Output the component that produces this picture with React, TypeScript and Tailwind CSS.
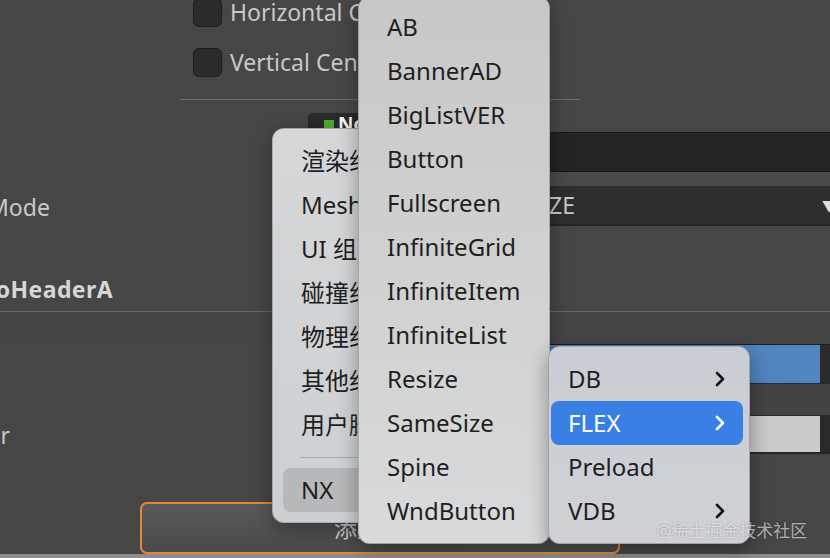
import React from 'react';

const font = { fontFamily: '"Noto Sans", "Noto Sans CJK SC", sans-serif' };

const Chevron = ({ light }: { light?: boolean }) => (
  <svg width="10" height="16" viewBox="0 0 10 16" className="shrink-0">
    <path d="M2 2 L8 8 L2 14" fill="none" stroke={light ? '#ffffff' : '#111111'} strokeWidth="2.6" strokeLinecap="round" strokeLinejoin="round" />
  </svg>
);

const CheckRow = ({ label }: { label: string }) => (
  <div className="flex items-center gap-2 pl-[193px] h-[29px]">
    <div className="w-[29px] h-[29px] rounded-[6px] bg-[#2b2b2b] border border-[#1e1e1e] shrink-0" />
    <span className="text-[23px] text-[#c9c9c9] whitespace-nowrap">{label}</span>
  </div>
);

const mainItems = ['渲染组件', 'Mesh 渲染器', 'UI 组件', '碰撞组件', '物理组件', '其他组件', '用户脚本组件'];
const nxItems = ['AB', 'BannerAD', 'BigListVER', 'Button', 'Fullscreen', 'InfiniteGrid', 'InfiniteItem', 'InfiniteList', 'Resize', 'SameSize', 'Spine', 'WndButton'];
const subItems = [
  { name: 'DB', sub: true },
  { name: 'FLEX', sub: true, active: true },
  { name: 'Preload', sub: false },
  { name: 'VDB', sub: true },
];

export default function App() {
  return (
    <div className="relative w-[830px] h-[558px] overflow-hidden bg-[#464646]" style={font}>
      {/* inspector panel behind the menus */}
      <div className="flex flex-col h-full">
        <div className="mt-[-2px] flex flex-col gap-[21px]">
          <CheckRow label="Horizontal Center" />
          <CheckRow label="Vertical Center" />
        </div>
        <div className="mt-[22px] ml-[180px] w-[400px] h-px bg-[#6b6b6b]" />
        <div className="mt-[13px] ml-[308px] h-[19px] w-[90px] rounded-t-[5px] bg-[#2a2a2a] flex items-start gap-1 pl-4 pt-[7px]">
          <div className="w-[10px] h-[10px] bg-[#4caf32]" />
          <span className="text-[19px] font-bold text-white leading-[12px] mt-[-2px]">Node</span>
        </div>
        <div className="ml-[300px] h-[40px] bg-[#242424] border-y border-[#1a1a1a]" />
        <div className="ml-[300px] h-[14px] bg-[#4a4a4a]" />
        <div className="flex h-[40px] items-center">
          <div className="w-[300px] shrink-0 overflow-hidden">
            <span className="block ml-[-12px] mt-[2px] text-[23px] text-[#c9c9c9]">Mode</span>
          </div>
          <div className="flex-1 h-full bg-[#2e2e2e] border-b-2 border-[#242424] flex items-center">
            <div className="w-[275px] text-right text-[23px] text-[#c9c9c9] whitespace-nowrap">CUSTOM_SIZE</div>
            <div className="flex-1" />
            <span className="text-[14px] text-[#e0e0e0] mr-[-6px]">▼</span>
          </div>
        </div>
        <div className="h-[85px] pt-[46px]">
          <div className="w-[113px] flex justify-end overflow-hidden">
            <span className="text-[23px] tracking-[0.4px] font-bold text-[#d6d6d6] whitespace-nowrap">LogoHeaderA</span>
          </div>
        </div>
        <div className="h-px bg-[#666666]" />
        <div className="h-[32px] bg-[#454545]" />
        <div className="flex h-[39px] ml-[420px] border-t border-[#1e1e1e]">
          <div className="flex-1 bg-gradient-to-r from-[#4a7cb4] to-[#5286c0]" />
          <div className="w-[10px] bg-[#2a2a2a]" />
        </div>
        <div className="h-[33px] ml-[420px] border-y border-[#2a2a2a] bg-[#434343]" />
        <div className="flex h-[38px] items-center">
          <div className="w-[10px] flex justify-end overflow-hidden shrink-0">
            <span className="text-[23px] text-[#c9c9c9] whitespace-nowrap">Color</span>
          </div>
          <div className="ml-[410px] flex-1 flex h-full border-b-2 border-[#262626]">
            <div className="flex-1 bg-gradient-to-r from-[#c2c2c2] to-[#cbcbcb]" />
            <div className="w-[10px] bg-[#2a2a2a]" />
          </div>
        </div>
        <div className="h-[48px] shrink-0" />
        <div className="ml-[140px] w-[480px] h-[52px] shrink-0 rounded-[7px] border-2 border-[#e08b3c] bg-gradient-to-b from-[#595959] to-[#4a4a4a] flex items-center justify-center">
          <span className="text-[23px] text-[#cfcfcf]">添加组件</span>
        </div>
        <div className="flex-1 bg-[#8d8d8d]" />
      </div>

      {/* context menu level 1 */}
      <div className="absolute left-[272px] top-[128px] w-[200px] rounded-[12px] bg-gradient-to-b from-[#d5d7d9] to-[#cdd0d2] border border-black/20 shadow-[0_6px_20px_rgba(0,0,0,0.35)] py-[10px] px-[10px]">
        {mainItems.map((t) => (
          <div key={t} className="h-[44px] flex items-center pl-[18px] text-[24px] text-[#1f1f1f] whitespace-nowrap">{t}</div>
        ))}
        <div className="my-[10px] ml-[17px] h-px bg-[#a9abad]" />
        <div className="h-[44px] flex items-center pl-[18px] rounded-[8px] bg-[#b6b8ba] text-[24px] text-[#1f1f1f]">NX</div>
      </div>

      {/* context menu level 2 */}
      <div className="absolute left-[358px] top-[-4px] w-[192px] rounded-[12px] bg-gradient-to-b from-[#c8c8c8] to-[#d9dadb] border border-black/20 shadow-[0_6px_20px_rgba(0,0,0,0.35)] pt-[8px] pb-[10px]">
        {nxItems.map((t) => (
          <div key={t} className="h-[44px] flex items-center pl-[28px] text-[24px] text-[#1f1f1f] whitespace-nowrap">{t}</div>
        ))}
      </div>

      {/* context menu level 3 */}
      <div className="absolute left-[548px] top-[346px] w-[202px] rounded-[12px] bg-gradient-to-b from-[#c9ced4] to-[#cfd1d4] border border-black/20 shadow-[0_6px_20px_rgba(0,0,0,0.35)] py-[10px] pl-[2px] pr-[6px]">
        {subItems.map((it) => (
          <div
            key={it.name}
            className={
              it.active
                ? 'h-[44px] flex items-center pl-[17px] pr-[18px] rounded-[8px] bg-[#3a80e4] text-[24px] text-white'
                : 'h-[44px] flex items-center pl-[17px] pr-[18px] text-[24px] text-[#1f1f1f]'
            }
          >
            <span className="flex-1">{it.name}</span>
            {it.sub && <Chevron light={it.active} />}
          </div>
        ))}
      </div>

      {/* watermark */}
      <div className="absolute left-[656px] top-[518px] text-[17px] text-white/60 whitespace-nowrap [text-shadow:0_0_2px_rgba(0,0,0,0.3)]">
        @稀土掘金技术社区
      </div>
    </div>
  );
}
